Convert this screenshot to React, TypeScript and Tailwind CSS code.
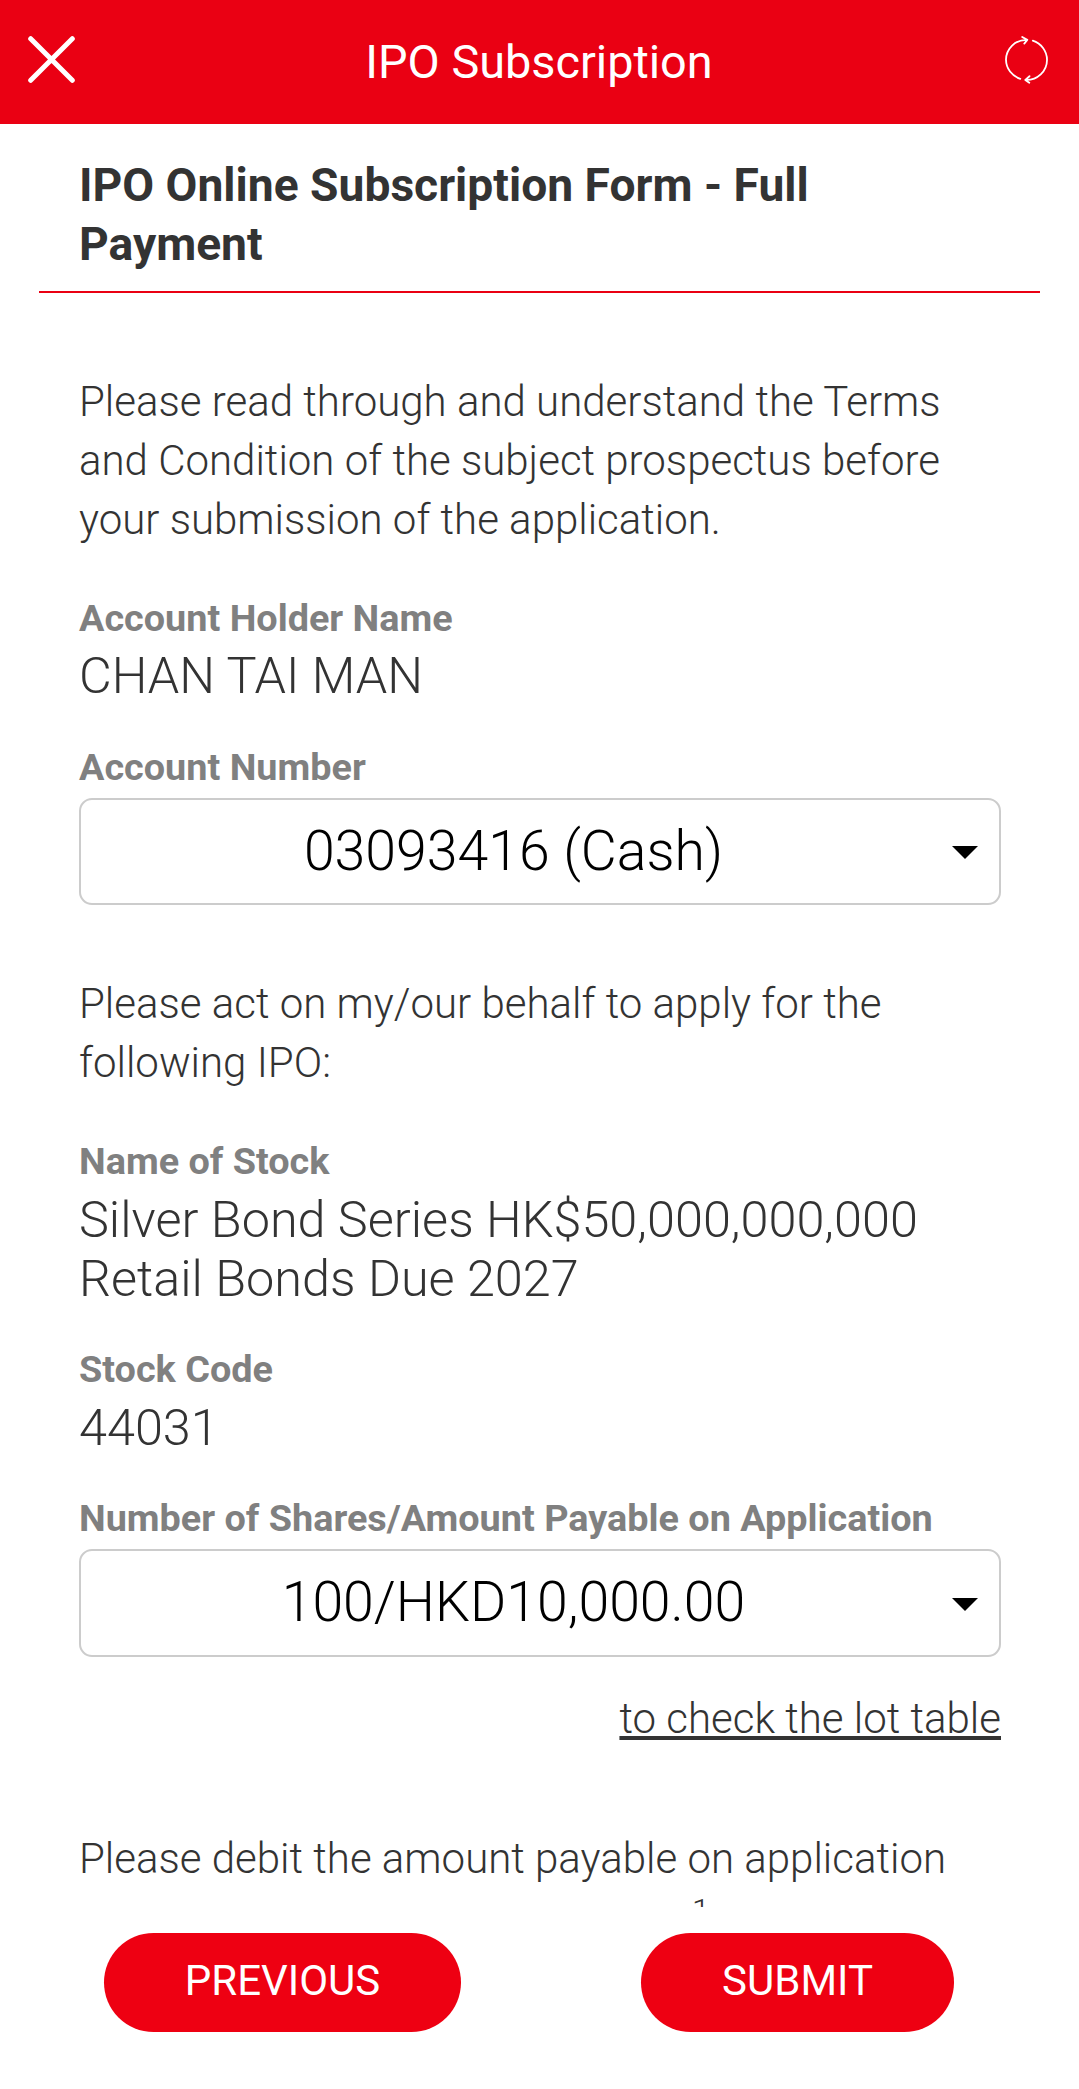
import type { ReactNode } from "react";

function Paragraph({ children, className = "" }: { children: ReactNode; className?: string }) {
  return <p className={`text-[42px] leading-[59px] font-light whitespace-nowrap ${className}`}>{children}</p>;
}

function Label({ children, className = "" }: { children: ReactNode; className?: string }) {
  return (
    <div className={`text-[37.8px] leading-[44px] font-bold whitespace-nowrap text-[#808080] ${className}`}>
      {children}
    </div>
  );
}

function Value({ children, className = "" }: { children: ReactNode; className?: string }) {
  return <div className={`text-[50.4px] leading-[59px] font-light whitespace-nowrap ${className}`}>{children}</div>;
}

function SelectBox({ children, className = "" }: { children: ReactNode; className?: string }) {
  return (
    <button
      type="button"
      className={`mt-[9px] flex w-full items-center rounded-[13px] border-2 border-[#cccccc] pr-[21px] text-black ${className}`}
    >
      <span className="mr-[6px] flex-1 text-center text-[55.4px] leading-[66px] font-light whitespace-nowrap">
        {children}
      </span>
      <svg className="mt-[2px] h-[13px] w-[26px]" viewBox="0 0 26 13">
        <path d="M0 0H26L13 13Z" />
      </svg>
    </button>
  );
}

export default function App() {
  return (
    <div className="flex h-[2089px] w-[1079px] flex-col overflow-hidden bg-white font-['Roboto',sans-serif] text-[#333333]">
      <header className="flex h-[124px] shrink-0 items-center justify-between bg-[#ea0013] pr-[31px] pl-[28px] text-white">
        <svg className="-mt-[5px] h-[47px] w-[47px]" viewBox="0 0 47 47" fill="none" stroke="currentColor" strokeWidth="5" strokeLinecap="round">
          <path d="M2.7 2.7L44.3 44.3M44.3 2.7L2.7 44.3" />
        </svg>
        <h1 className="mr-0.5 text-[46.8px] leading-[56px] font-normal">IPO Subscription</h1>
        <svg className="-mt-[5px] h-[48px] w-[43px]" viewBox="0 0 43 48" fill="none" stroke="currentColor" strokeWidth="1.8" strokeLinecap="round" strokeLinejoin="round">
          <path d="M15.3 42.8A20.5 20.2 0 0 1 1 23.8A20.5 20 0 0 1 21.8 3.8M17.2 1L22.3 3.9L19.3 7.6" />
          <path d="M27.8 4.7A20.5 20.2 0 0 1 42 23.8A20.5 20 0 0 1 20.6 43.9M24.5 40.2L20.3 43.9L24.3 46.8" />
        </svg>
      </header>

      <main className="h-[1783px] shrink-0 overflow-hidden">
        <div className="mx-[39px] border-b-2 border-[#ea0013] px-10 pt-8 pb-[17px]">
          <h2 className="text-[46.2px] leading-[59px] font-bold whitespace-nowrap">
            IPO Online Subscription Form - Full
            <br />
            Payment
          </h2>
        </div>

        <div className="mr-[78px] ml-[79px] pt-[79px]">
          <Paragraph>
            Please read through and understand the Terms
            <br />
            and Condition of the subject prospectus before
            <br />
            your submission of the application.
          </Paragraph>

          <Label className="mt-[47px]">Account Holder Name</Label>
          <Value className="mt-1.5">CHAN TAI MAN</Value>

          <Label className="mt-10">Account Number</Label>
          <SelectBox className="h-[107px]">03093416 (Cash)</SelectBox>

          <Paragraph className="mt-[69px]">
            Please act on my/our behalf to apply for the
            <br />
            following IPO:
          </Paragraph>

          <Label className="mt-[47px]">Name of Stock</Label>
          <Value className="mt-[7px]">
            Silver Bond Series HK$50,000,000,000
            <br />
            Retail Bonds Due 2027
          </Value>

          <Label className="mt-[39px]">Stock Code</Label>
          <Value className="mt-[7px]">44031</Value>

          <Label className="mt-[39px]">Number of Shares/Amount Payable on Application</Label>
          <SelectBox className="h-[108px]">100/HKD10,000.00</SelectBox>

          <Paragraph className="mt-8 text-right">
            <a href="#" className="underline decoration-4 underline-offset-[3px] [text-decoration-skip-ink:none]">
              to check the lot table
            </a>
          </Paragraph>

          <Paragraph className="mt-[81px]">Please debit the amount payable on application</Paragraph>
          <div className="mt-1.5 pl-[613px] text-[32px] leading-8 font-light">1</div>
        </div>
      </main>

      <footer className="flex items-start justify-between pt-[26px] pr-[125px] pl-[104px] text-[42px] leading-[49px] text-white">
        <button type="button" className="h-[99px] w-[357px] rounded-full bg-[#ee0012] pb-1">PREVIOUS</button>
        <button type="button" className="h-[99px] w-[313px] rounded-full bg-[#ee0012] pb-1">SUBMIT</button>
      </footer>
    </div>
  );
}
